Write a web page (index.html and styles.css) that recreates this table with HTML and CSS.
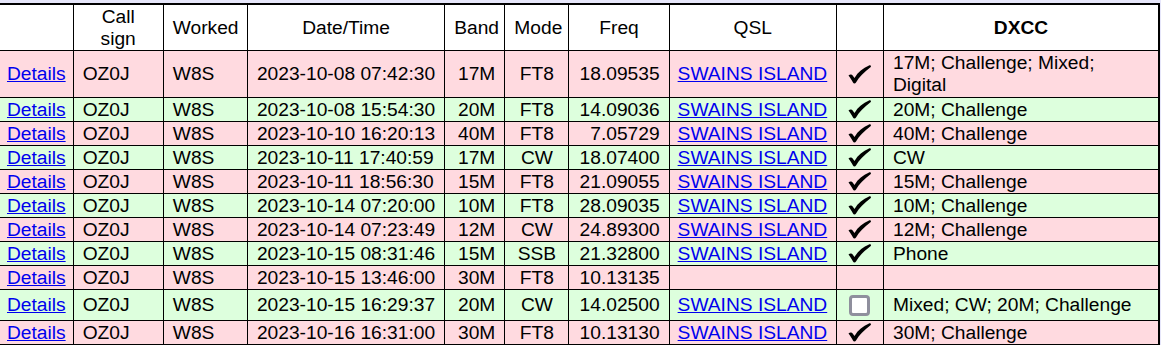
FILE: index.html
```html
<!DOCTYPE html>
<html>
<head>
<meta charset="utf-8">
<link rel="stylesheet" href="styles.css">
</head>
<body>
<table class="log">
  <colgroup>
    <col class="c-det"><col class="c-call"><col class="c-wkd"><col class="c-date"><col class="c-band"><col class="c-mode"><col class="c-freq"><col class="c-qsl"><col class="c-chk"><col class="c-dxcc">
  </colgroup>
  <thead>
    <tr>
      <th></th><th>Call sign</th><th>Worked</th><th>Date/Time</th><th>Band</th><th>Mode</th><th>Freq</th><th>QSL</th><th></th><th class="bold">DXCC</th>
    </tr>
  </thead>
  <tbody>
    <tr class="pink first">
      <td class="c"><a href="#">Details</a></td><td>OZ0J</td><td>W8S</td><td>2023-10-08 07:42:30</td><td class="r">17M</td><td class="c">FT8</td><td class="r">18.09535</td><td class="q"><a href="#">SWAINS ISLAND</a></td>
      <td class="c"><svg class="tick" viewBox="0 0 24 19"><path d="M0.5 10.5C2 9 4 9 5 11L6.5 13C10 7 15 3 21 0.5C22.5 0 23.8 1 22.5 2.2C16 7 11 12 8 17.5C7.3 18.7 5.5 18.7 5 17.5C3.5 14.5 2 12.5 0.5 10.5Z"/></svg></td>
      <td>17M; Challenge; Mixed; Digital</td>
    </tr>
    <tr class="green">
      <td class="c"><a href="#">Details</a></td><td>OZ0J</td><td>W8S</td><td>2023-10-08 15:54:30</td><td class="r">20M</td><td class="c">FT8</td><td class="r">14.09036</td><td class="q"><a href="#">SWAINS ISLAND</a></td>
      <td class="c"><svg class="tick" viewBox="0 0 24 19"><path d="M0.5 10.5C2 9 4 9 5 11L6.5 13C10 7 15 3 21 0.5C22.5 0 23.8 1 22.5 2.2C16 7 11 12 8 17.5C7.3 18.7 5.5 18.7 5 17.5C3.5 14.5 2 12.5 0.5 10.5Z"/></svg></td>
      <td>20M; Challenge</td>
    </tr>
    <tr class="pink">
      <td class="c"><a href="#">Details</a></td><td>OZ0J</td><td>W8S</td><td>2023-10-10 16:20:13</td><td class="r">40M</td><td class="c">FT8</td><td class="r">7.05729</td><td class="q"><a href="#">SWAINS ISLAND</a></td>
      <td class="c"><svg class="tick" viewBox="0 0 24 19"><path d="M0.5 10.5C2 9 4 9 5 11L6.5 13C10 7 15 3 21 0.5C22.5 0 23.8 1 22.5 2.2C16 7 11 12 8 17.5C7.3 18.7 5.5 18.7 5 17.5C3.5 14.5 2 12.5 0.5 10.5Z"/></svg></td>
      <td>40M; Challenge</td>
    </tr>
    <tr class="green">
      <td class="c"><a href="#">Details</a></td><td>OZ0J</td><td>W8S</td><td>2023-10-11 17:40:59</td><td class="r">17M</td><td class="c">CW</td><td class="r">18.07400</td><td class="q"><a href="#">SWAINS ISLAND</a></td>
      <td class="c"><svg class="tick" viewBox="0 0 24 19"><path d="M0.5 10.5C2 9 4 9 5 11L6.5 13C10 7 15 3 21 0.5C22.5 0 23.8 1 22.5 2.2C16 7 11 12 8 17.5C7.3 18.7 5.5 18.7 5 17.5C3.5 14.5 2 12.5 0.5 10.5Z"/></svg></td>
      <td>CW</td>
    </tr>
    <tr class="pink">
      <td class="c"><a href="#">Details</a></td><td>OZ0J</td><td>W8S</td><td>2023-10-11 18:56:30</td><td class="r">15M</td><td class="c">FT8</td><td class="r">21.09055</td><td class="q"><a href="#">SWAINS ISLAND</a></td>
      <td class="c"><svg class="tick" viewBox="0 0 24 19"><path d="M0.5 10.5C2 9 4 9 5 11L6.5 13C10 7 15 3 21 0.5C22.5 0 23.8 1 22.5 2.2C16 7 11 12 8 17.5C7.3 18.7 5.5 18.7 5 17.5C3.5 14.5 2 12.5 0.5 10.5Z"/></svg></td>
      <td>15M; Challenge</td>
    </tr>
    <tr class="green">
      <td class="c"><a href="#">Details</a></td><td>OZ0J</td><td>W8S</td><td>2023-10-14 07:20:00</td><td class="r">10M</td><td class="c">FT8</td><td class="r">28.09035</td><td class="q"><a href="#">SWAINS ISLAND</a></td>
      <td class="c"><svg class="tick" viewBox="0 0 24 19"><path d="M0.5 10.5C2 9 4 9 5 11L6.5 13C10 7 15 3 21 0.5C22.5 0 23.8 1 22.5 2.2C16 7 11 12 8 17.5C7.3 18.7 5.5 18.7 5 17.5C3.5 14.5 2 12.5 0.5 10.5Z"/></svg></td>
      <td>10M; Challenge</td>
    </tr>
    <tr class="pink">
      <td class="c"><a href="#">Details</a></td><td>OZ0J</td><td>W8S</td><td>2023-10-14 07:23:49</td><td class="r">12M</td><td class="c">CW</td><td class="r">24.89300</td><td class="q"><a href="#">SWAINS ISLAND</a></td>
      <td class="c"><svg class="tick" viewBox="0 0 24 19"><path d="M0.5 10.5C2 9 4 9 5 11L6.5 13C10 7 15 3 21 0.5C22.5 0 23.8 1 22.5 2.2C16 7 11 12 8 17.5C7.3 18.7 5.5 18.7 5 17.5C3.5 14.5 2 12.5 0.5 10.5Z"/></svg></td>
      <td>12M; Challenge</td>
    </tr>
    <tr class="green">
      <td class="c"><a href="#">Details</a></td><td>OZ0J</td><td>W8S</td><td>2023-10-15 08:31:46</td><td class="r">15M</td><td class="c">SSB</td><td class="r">21.32800</td><td class="q"><a href="#">SWAINS ISLAND</a></td>
      <td class="c"><svg class="tick" viewBox="0 0 24 19"><path d="M0.5 10.5C2 9 4 9 5 11L6.5 13C10 7 15 3 21 0.5C22.5 0 23.8 1 22.5 2.2C16 7 11 12 8 17.5C7.3 18.7 5.5 18.7 5 17.5C3.5 14.5 2 12.5 0.5 10.5Z"/></svg></td>
      <td>Phone</td>
    </tr>
    <tr class="pink">
      <td class="c"><a href="#">Details</a></td><td>OZ0J</td><td>W8S</td><td>2023-10-15 13:46:00</td><td class="r">30M</td><td class="c">FT8</td><td class="r">10.13135</td><td class="q"></td>
      <td class="c"></td>
      <td></td>
    </tr>
    <tr class="green">
      <td class="c"><a href="#">Details</a></td><td>OZ0J</td><td>W8S</td><td>2023-10-15 16:29:37</td><td class="r">20M</td><td class="c">CW</td><td class="r">14.02500</td><td class="q"><a href="#">SWAINS ISLAND</a></td>
      <td class="c"><span class="box"></span></td>
      <td>Mixed; CW; 20M; Challenge</td>
    </tr>
    <tr class="pink">
      <td class="c"><a href="#">Details</a></td><td>OZ0J</td><td>W8S</td><td>2023-10-16 16:31:00</td><td class="r">30M</td><td class="c">FT8</td><td class="r">10.13130</td><td class="q"><a href="#">SWAINS ISLAND</a></td>
      <td class="c"><svg class="tick" viewBox="0 0 24 19"><path d="M0.5 10.5C2 9 4 9 5 11L6.5 13C10 7 15 3 21 0.5C22.5 0 23.8 1 22.5 2.2C16 7 11 12 8 17.5C7.3 18.7 5.5 18.7 5 17.5C3.5 14.5 2 12.5 0.5 10.5Z"/></svg></td>
      <td>30M; Challenge</td>
    </tr>
  </tbody>
</table>
</body>
</html>
```
FILE: styles.css
```css
html, body {
  margin: 0;
  padding: 0;
  background: #e6e6fa;
}
body {
  padding-top: 3px;
  overflow: hidden;
}
.log {
  margin-left: -2px;
  width: 1162px;
  table-layout: fixed;
  border-collapse: collapse;
  border: 2px solid #000;
  background: #fff;
  font-family: "Liberation Sans", Arial, sans-serif;
  font-size: 19.2px;
  line-height: 22px;
  color: #000;
}
.c-det { width: 74px; }
.c-call { width: 90px; }
.c-wkd { width: 84px; }
.c-date { width: 197px; }
.c-band { width: 60px; }
.c-mode { width: 64px; }
.c-freq { width: 100px; }
.c-qsl { width: 167px; }
.c-chk { width: 47px; }
.c-dxcc { width: 275px; }
.log th, .log td {
  border: 1px solid #000;
  padding: 0.5px 9px;
  vertical-align: middle;
}
.log th {
  font-weight: normal;
  text-align: center;
}
.log th.bold { font-weight: bold; }
.log td { text-align: left; }
.log td.r { text-align: right; }
.log td.c { text-align: center; padding-left: 0; padding-right: 0; }
.log td.q { padding-left: 8px; padding-right: 0; white-space: nowrap; }
.log .first td { padding-top: 1px; padding-bottom: 1px; }
.pink td { background: #ffdae0; }
.green td { background: #ddffdd; }
.log a { color: #0000ee; text-decoration: underline; white-space: nowrap; }
.tick {
  display: block;
  width: 24px;
  height: 19px;
  margin: 0 auto;
  fill: #000;
}
.box {
  display: block;
  box-sizing: border-box;
  width: 21px;
  height: 21px;
  margin: 4px auto;
  border: 3px solid #8f8f9d;
  border-radius: 4px;
  background: #fff;
}
```
